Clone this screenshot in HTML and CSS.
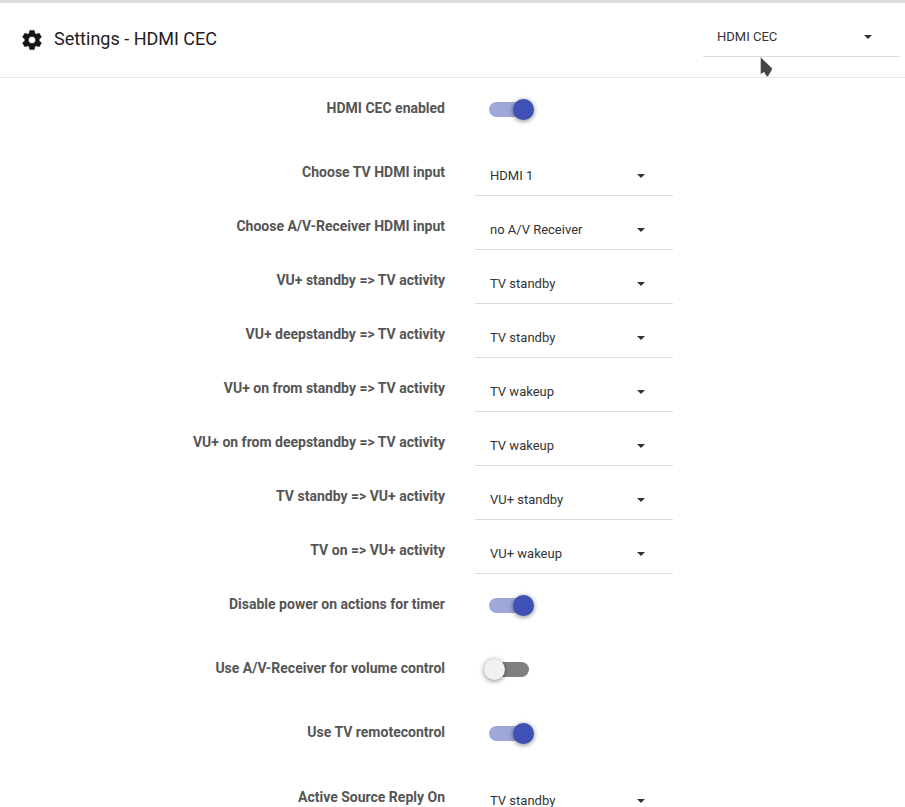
FILE: index.html
```html
<!DOCTYPE html>
<html lang="en">
<head>
  <meta charset="UTF-8" />
  <title>Settings - HDMI CEC</title>
  <link rel="stylesheet" href="styles.css">
</head>
<body>
  <div class="topline"></div>
  <header class="toolbar">
    <svg class="gear" viewBox="0 0 24 24" width="24" height="24">
      <path d="M19.14 12.94c.04-.3.06-.61.06-.94 0-.32-.02-.64-.07-.94l2.03-1.58c.18-.14.23-.41.12-.61l-1.92-3.32c-.12-.22-.37-.29-.59-.22l-2.39.96c-.5-.38-1.03-.7-1.62-.94l-.36-2.54c-.04-.24-.24-.41-.48-.41h-3.84c-.24 0-.43.17-.47.41l-.36 2.54c-.59.24-1.13.57-1.62.94l-2.39-.96c-.22-.08-.47 0-.59.22L2.74 8.87c-.12.21-.08.47.12.61l2.03 1.58c-.05.3-.09.63-.09.94s.02.64.07.94l-2.03 1.58c-.18.14-.23.41-.12.61l1.92 3.32c.12.22.37.29.59.22l2.39-.96c.5.38 1.03.7 1.62.94l.36 2.54c.05.24.24.41.48.41h3.84c.24 0 .44-.17.47-.41l.36-2.54c.59-.24 1.13-.56 1.62-.94l2.39.96c.22.08.47 0 .59-.22l1.92-3.32c.12-.22.07-.47-.12-.61l-2.01-1.58zM12 15.6c-1.98 0-3.6-1.62-3.6-3.6s1.62-3.6 3.6-3.6 3.6 1.62 3.6 3.6-1.62 3.6-3.6 3.6z"/>
    </svg>
    <h1>Settings - HDMI CEC</h1>
    <div class="select select-head"><span>HDMI CEC</span><i class="caret"></i></div>
  </header>
  <svg class="cursor" viewBox="0 0 13 21" width="13" height="21">
    <path d="M0.5 0 L12 11 L12 13 L8 19.5 L6.5 19.5 L4 15 L0.5 17.5 Z" fill="#444" stroke="#eee" stroke-width="0.5"/>
  </svg>

  <main class="settings">
    <div class="row tall">
      <label>HDMI CEC enabled</label>
      <div class="switch on"><b></b></div>
    </div>
    <div class="row">
      <label>Choose TV HDMI input</label>
      <div class="select"><span>HDMI 1</span><i class="caret"></i></div>
    </div>
    <div class="row">
      <label>Choose A/V-Receiver HDMI input</label>
      <div class="select"><span>no A/V Receiver</span><i class="caret"></i></div>
    </div>
    <div class="row">
      <label>VU+ standby =&gt; TV activity</label>
      <div class="select"><span>TV standby</span><i class="caret"></i></div>
    </div>
    <div class="row">
      <label>VU+ deepstandby =&gt; TV activity</label>
      <div class="select"><span>TV standby</span><i class="caret"></i></div>
    </div>
    <div class="row">
      <label>VU+ on from standby =&gt; TV activity</label>
      <div class="select"><span>TV wakeup</span><i class="caret"></i></div>
    </div>
    <div class="row">
      <label>VU+ on from deepstandby =&gt; TV activity</label>
      <div class="select"><span>TV wakeup</span><i class="caret"></i></div>
    </div>
    <div class="row">
      <label>TV standby =&gt; VU+ activity</label>
      <div class="select"><span>VU+ standby</span><i class="caret"></i></div>
    </div>
    <div class="row">
      <label>TV on =&gt; VU+ activity</label>
      <div class="select"><span>VU+ wakeup</span><i class="caret"></i></div>
    </div>
    <div class="row tall">
      <label>Disable power on actions for timer</label>
      <div class="switch on"><b></b></div>
    </div>
    <div class="row tall">
      <label>Use A/V-Receiver for volume control</label>
      <div class="switch"><b></b></div>
    </div>
    <div class="row tall">
      <label>Use TV remotecontrol</label>
      <div class="switch on"><b></b></div>
    </div>
    <div class="row last">
      <label>Active Source Reply On</label>
      <div class="select"><span>TV standby</span><i class="caret"></i></div>
    </div>
  </main>
</body>
</html>
```

FILE: styles.css
```css
* {
  box-sizing: border-box;
}
html,
body {
  height: 807px;
  overflow: hidden;
}
body {
  margin: 0;
  position: relative;
  font-family: Roboto, "Liberation Sans", sans-serif;
  background-color: #fff;
  color: #333;
}

.topline {
  height: 3px;
  background-color: #dedede;
}

/* header */
.toolbar {
  display: flex;
  align-items: flex-start;
  height: 75px;
  border-bottom: 1px solid #e8e8e8;
  padding: 0 5px 0 20px;
}
.gear {
  margin-top: 25px;
  fill: #151515;
  stroke: #151515;
  stroke-width: 0.5;
  flex: none;
}
.toolbar h1 {
  margin: 25px 0 0 10px;
  font-size: 18px;
  line-height: 22px;
  font-weight: 400;
  color: #212121;
  flex: 1;
}
.cursor {
  position: absolute;
  left: 760px;
  top: 57px;
}

/* rows */
.row {
  display: flex;
  align-items: flex-start;
  height: 54px;
}
.row.tall {
  height: 64px;
}
.row.last {
  margin-top: 1px;
}
.row label {
  width: 445px;
  margin-top: 20px;
  text-align: right;
  font-size: 14px;
  line-height: 20px;
  font-weight: 700;
  color: #555;
}

/* select */
.select {
  display: flex;
  justify-content: space-between;
  align-items: center;
  width: 198px;
  height: 54px;
  margin-left: 30px;
  padding: 14px 28px 0 15px;
  border-bottom: 1px solid #ddd;
  font-size: 13px;
  color: #333;
}
.select-head {
  margin-left: 0;
  width: 197px;
  padding-left: 14px;
  flex: none;
}
.caret {
  width: 0;
  height: 0;
  border-left: 4px solid transparent;
  border-right: 4px solid transparent;
  border-top: 4px solid #333;
}

/* toggle */
.switch {
  position: relative;
  width: 40px;
  height: 15px;
  margin: 24px 0 0 44px;
  border-radius: 8px;
  background-color: #9fa8da;
}
.switch b {
  position: absolute;
  top: -3px;
  left: 24px;
  width: 21px;
  height: 21px;
  border-radius: 50%;
  background-color: #3f51b5;
  box-shadow: 0 1px 5px rgba(0, 0, 0, 0.5);
}
.switch:not(.on) {
  background-color: #808080;
}
.switch:not(.on) b {
  left: -5px;
  background-color: #f1f1f1;
}
```
